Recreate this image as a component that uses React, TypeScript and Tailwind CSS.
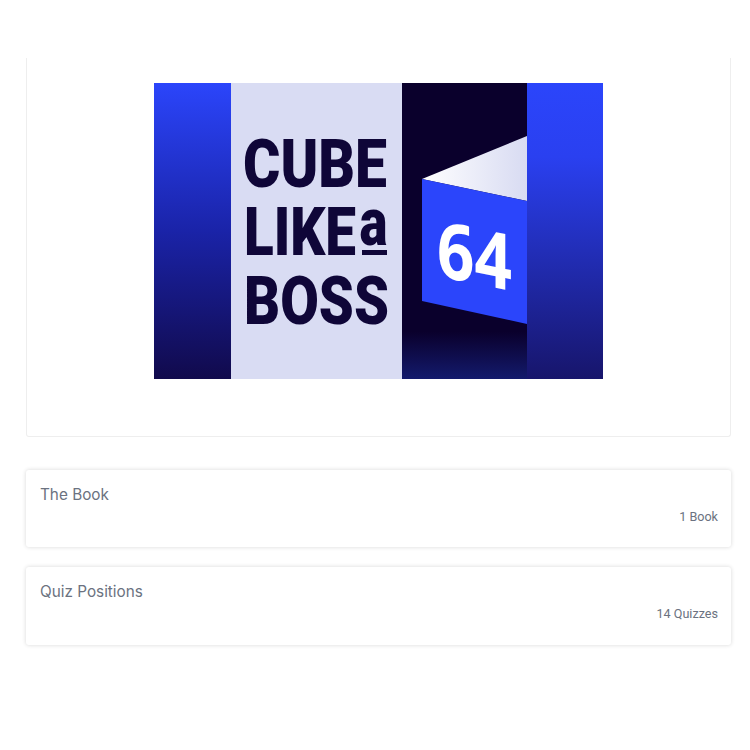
function BookCover() {
  return (
    <svg width="449" height="296" viewBox="0 0 449 296" className="block">
      <defs>
        <linearGradient id="strip" x1="0" y1="0" x2="0" y2="1">
          <stop offset="0" stopColor="#2b45fb" />
          <stop offset="0.5" stopColor="#1a23a8" />
          <stop offset="1" stopColor="#110a4c" />
        </linearGradient>
        <linearGradient id="stripRight" x1="0" y1="0" x2="0" y2="1">
          <stop offset="0" stopColor="#2b45fb" />
          <stop offset="0.25" stopColor="#2a40f0" />
          <stop offset="1" stopColor="#17156b" />
        </linearGradient>
        <linearGradient id="dark" x1="0" y1="0" x2="0" y2="1">
          <stop offset="0" stopColor="#0a002c" />
          <stop offset="0.84" stopColor="#0a002c" />
          <stop offset="1" stopColor="#131a6c" />
        </linearGradient>
        <linearGradient id="page" x1="0" y1="0" x2="1" y2="0">
          <stop offset="0" stopColor="#ffffff" />
          <stop offset="1" stopColor="#d8dbf2" />
        </linearGradient>
      </defs>
      <rect x="0" y="0" width="77" height="296" fill="url(#strip)" />
      <rect x="77" y="0" width="171" height="296" fill="#d9dcf3" />
      <rect x="248" y="0" width="125" height="296" fill="url(#dark)" />
      <rect x="373" y="0" width="76" height="296" fill="url(#stripRight)" />
      <polygon points="268,96 373,53 373,118" fill="url(#page)" />
      <polygon points="268,96 373,118 373,241 268,218" fill="#2b45fb" />
      <g fontFamily="Roboto, sans-serif" fontWeight="900" fill="#0f0638" fontSize="67">
        <text x="89" y="103.5" textLength="144" lengthAdjust="spacingAndGlyphs">CUBE</text>
        <text x="90" y="172" textLength="112" lengthAdjust="spacingAndGlyphs">LIKE</text>
        <text x="205.5" y="161.5" textLength="28" lengthAdjust="spacingAndGlyphs">a</text>
        <rect x="208" y="167" width="25" height="5" />
        <text x="90" y="241" textLength="145" lengthAdjust="spacingAndGlyphs">BOSS</text>
      </g>
      <text
        x="0"
        y="0"
        transform="matrix(1 0.2 0 1 283 193)"
        fontFamily="'Noto Sans', sans-serif"
        fontWeight="700"
        fontSize="78"
        fill="#ffffff"
        textLength="75"
        lengthAdjust="spacingAndGlyphs"
      >
        64
      </text>
    </svg>
  )
}

function SectionCard({ title, count }: { title: string; count: string }) {
  return (
    <div className="h-[77.5px] rounded-[3px] bg-white pt-4 pr-[13px] pl-3.5 shadow-[0_0_4px_rgba(0,0,0,0.16)]">
      <div className="text-[15.3px] leading-[18px] text-[#6b7280] font-['Inter',sans-serif]">{title}</div>
      <div className="mt-[5px] text-right text-[12.6px] leading-[16px] text-[#6b7280] font-['Roboto',sans-serif]">{count}</div>
    </div>
  )
}

export default function App() {
  return (
    <div className="h-[750px] w-[750px] bg-white pt-[58px] pl-[26px] pr-[19px]">
      <div className="flex h-[379px] justify-center rounded-b-[3px] border-x border-b border-[#eeeeee] pt-[25px]">
        <div>
          <BookCover />
        </div>
      </div>
      <div className="mt-[32.5px] flex flex-col gap-5">
        <SectionCard title="The Book" count="1 Book" />
        <SectionCard title="Quiz Positions" count="14 Quizzes" />
      </div>
    </div>
  )
}
